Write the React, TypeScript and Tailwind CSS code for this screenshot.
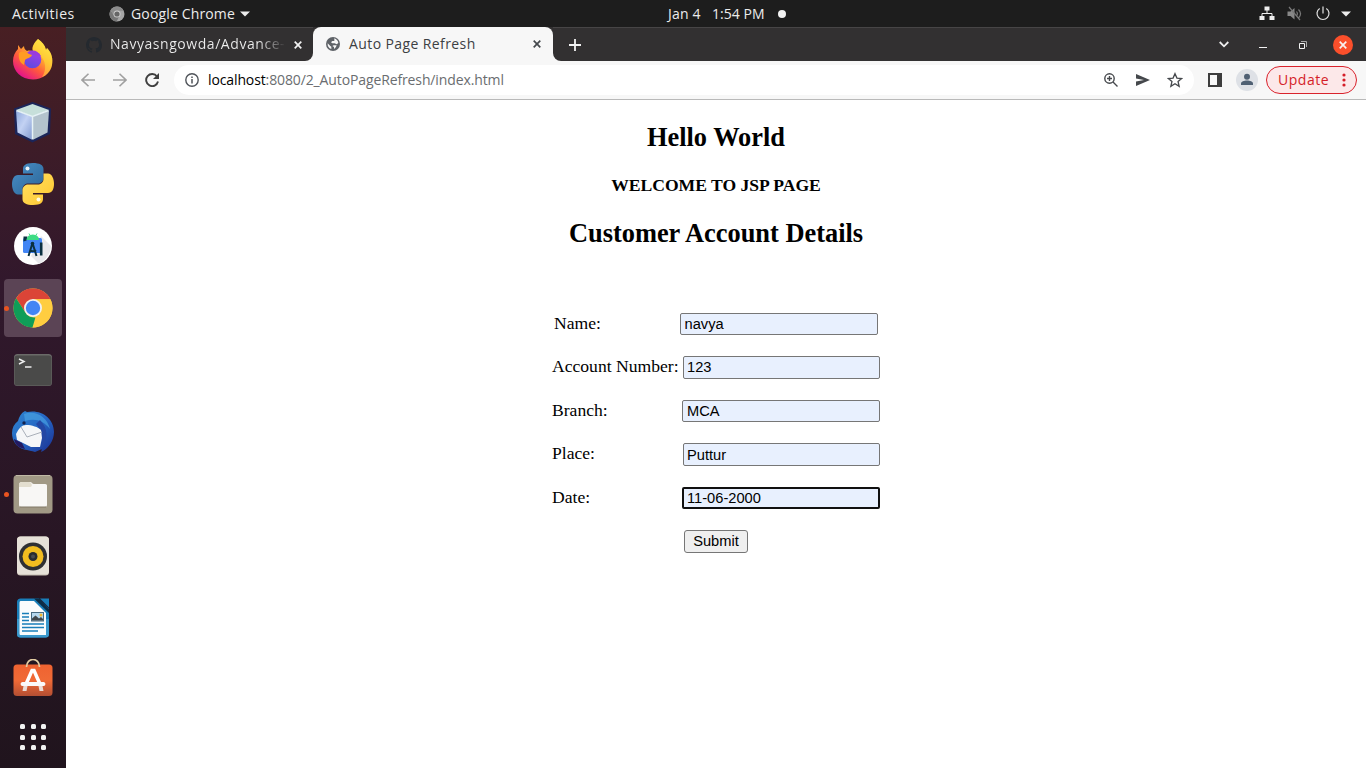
import React from "react";

const ui = "font-['Open_Sans','Noto_Sans',sans-serif]";

function Svg({ w = 42, h = w, box, className = "", children }: { w?: number; h?: number; box?: string; className?: string; children: React.ReactNode }) {
  return (
    <svg width={w} height={h} viewBox={box ?? `0 0 ${w} ${h}`} className={`shrink-0 ${className}`} fill="none">
      {children}
    </svg>
  );
}

function Firefox() {
  return (
    <Svg>
      <defs>
        <linearGradient id="ff1" x1="0.85" y1="0.1" x2="0.25" y2="0.95">
          <stop offset="0" stopColor="#fff04a" />
          <stop offset="0.35" stopColor="#ffb02e" />
          <stop offset="0.65" stopColor="#ff5a3c" />
          <stop offset="1" stopColor="#e3138a" />
        </linearGradient>
        <linearGradient id="ff2" x1="0.7" y1="0" x2="0.3" y2="1">
          <stop offset="0" stopColor="#a63be8" />
          <stop offset="1" stopColor="#5b4ce0" />
        </linearGradient>
      </defs>
      <path d="M26 0c4 3 7 6 8 11l1-2c5 5 6 11 5 17-2 9-10 14.500-19 14.500C9 40.500 1 32 1 22c0-5 2-9 5-12V6l3 4 3-3c0 2 1 4 3 5 3-1 4 0 6 0-2-4 2-9 5-12z" fill="url(#ff1)" />
      <path d="M26 0c4 3 7 6 8 11l1-2c5 5 6 11 5 17-1 6-5 10-10 12 5-7 4-17-3-23-3-1-5-2-6-3-1-5 2-9 5-12z" fill="#ffdc3c" opacity=".55" />
      <circle cx="20.500" cy="20.500" r="8.800" fill="url(#ff2)" />
      <path d="M7 14c4-3 7-1 10 1l3 1c-1 3-5 3-7 5 0 2-1 3-1 5-4-2-6-7-5-12z" fill="#ff9b22" />
      <path d="M16 13c5-3 10-1 13 4l-7-1z" fill="#9a3bdc" />
    </Svg>
  );
}

function NetBeans() {
  return (
    <Svg>
      <defs>
        <linearGradient id="nb" x1="0" y1="0" x2="1" y2="1">
          <stop offset="0" stopColor="#8ea9dd" />
          <stop offset="0.45" stopColor="#c3d2f3" />
          <stop offset="1" stopColor="#7f98cf" />
        </linearGradient>
      </defs>
      <path d="M20.500 1L39 7.500 38 33l-17.500 8.500L3 33 2 7.500z" fill="#1b2559" />
      <path d="M20.500 3L37 9l-16.500 6.500L4 9z" fill="#c6dfda" />
      <path d="M4 9.500l16.500 6V39L5.500 31.500z" fill="url(#nb)" />
      <path d="M20.500 15.500l16.500-6-1.500 22L20.500 39z" fill="#b3c3cd" />
      <path d="M4.500 9.500l16 6 16-6M20.500 15.500V38" stroke="#e6f2f6" strokeWidth="1.500" />
    </Svg>
  );
}

function Python() {
  return (
    <Svg>
      <defs>
        <linearGradient id="py1" x1="0" y1="0" x2="1" y2="1">
          <stop offset="0" stopColor="#4a90c8" />
          <stop offset="1" stopColor="#2a6496" />
        </linearGradient>
        <linearGradient id="py2" x1="0" y1="0" x2="1" y2="1">
          <stop offset="0" stopColor="#ffe263" />
          <stop offset="1" stopColor="#ffc52e" />
        </linearGradient>
      </defs>
      <path d="M20.800 0C13 0 11 3 11 6v4.500h10V12H6c-4 0-6 4-6 9s2 10.500 6 10.500h4.500V26c0-3 2.500-5.500 5.500-5.500h10c3 0 5.500-2.500 5.500-5.500V6c0-4-4-6-10.700-6z" fill="url(#py1)" />
      <path d="M21.200 42C29 42 31 39 31 36v-4.500H21V30h15c4 0 6-4 6-9s-2-10.500-6-10.500h-4.500V16c0 3-2.500 5.500-5.500 5.500H16c-3 0-5.500 2.500-5.500 5.500v9c0 4 4 6 10.700 6z" fill="url(#py2)" />
      <circle cx="15.500" cy="5.500" r="2" fill="#eaf4fb" />
      <circle cx="26.500" cy="36.500" r="2" fill="#fffbe0" />
    </Svg>
  );
}

function AndroidStudio() {
  return (
    <Svg>
      <circle cx="21" cy="21" r="19" fill="#fff" />
      <path d="M29 11l10 10c0 7-5 14-12 18l-8-8z" fill="#e9e9ec" />
      <rect x="11" y="13" width="19" height="15" rx="1.500" fill="#4285f4" />
      <path d="M11.500 11.500h4l-1 4-3 1z" fill="#0b3040" />
      <path d="M14.500 15a6.300 5.500 0 0 1 12.600 0z" fill="#3ddc84" />
      <path d="M17 8.500l1.500 2.500M25 8.500L23.500 11" stroke="#3ddc84" strokeWidth="1" />
      <path d="M20.500 18l-4 13M20.500 18l4 13M17.500 25c2 1.500 4.500 1.500 6.500 0" stroke="#0b3040" strokeWidth="2" />
      <path d="M29.200 17.500v13" stroke="#0b3040" strokeWidth="2.600" />
      <circle cx="20.500" cy="18.500" r="1.800" fill="#0b3040" />
    </Svg>
  );
}

function Chrome() {
  return (
    <Svg>
      <circle cx="21" cy="21" r="19.500" fill="#ffcd40" />
      <path d="M4.110 11.250A19.500 19.500 0 0 1 38.400 12.200H21L13.400 25.400z" fill="#db4437" />
      <path d="M4.110 11.250L13.400 25.400c2 4 6 5 10 5.200L20.500 40.500A19.500 19.500 0 0 1 4.110 11.250z" fill="#0f9d58" />
      <path d="M28.600 25.400L20.500 40.500A19.500 19.500 0 0 0 38.400 12.200H21z" fill="#ffcd40" />
      <circle cx="21" cy="21" r="9" fill="#f1f1f1" />
      <circle cx="21" cy="21" r="7.200" fill="#4285f4" />
    </Svg>
  );
}

function Terminal() {
  return (
    <Svg>
      <rect x="2" y="5" width="38" height="32" rx="3.500" fill="#6a6a68" />
      <rect x="2.500" y="6.500" width="37" height="30" rx="3" fill="#4a4a49" />
      <path d="M7 10l5 2.500L7 15" stroke="#eee" strokeWidth="1.500" />
      <path d="M13 18h6.500" stroke="#eee" strokeWidth="1.500" />
    </Svg>
  );
}

function Thunderbird() {
  return (
    <Svg>
      <defs>
        <linearGradient id="tb" x1="0" y1="0" x2="1" y2="1">
          <stop offset="0" stopColor="#2f86cf" />
          <stop offset="0.5" stopColor="#2566c4" />
          <stop offset="1" stopColor="#1b2f91" />
        </linearGradient>
      </defs>
      <path d="M13 0l2 1c14-3 27 6 27 20 0 9-6 17-13 20l1-3-7 3c-6-2-16-2-20-9C1 29 0 26 0 22c0-5 2-9 6-12 1-4 3-8 7-10z" fill="url(#tb)" />
      <path d="M12 3c12-4 23 3 26 15-7-9-15-11-25-8" fill="#4aa5e4" opacity=".65" />
      <path d="M28 9c8 8 9 19 1 30 2-9 1-20-5-26z" fill="#2447a4" />
      <path d="M4 23c3-6 6-9 10-9 6 0 12 2 15 5l1 8-2 9-9 0-14-7z" fill="#f5f6f8" />
      <path d="M9 16l6 10 15-5" stroke="#a9afb9" strokeWidth="1" />
      <circle cx="12" cy="12" r="1.700" fill="#14234f" />
      <path d="M2 28c1 6 5 9 11 10l-3-6z" fill="#241a60" />
    </Svg>
  );
}

function Files() {
  return (
    <Svg>
      <rect x="1.500" y="2" width="39" height="38.500" rx="4" fill="#a19985" />
      <path d="M4 2.500h34" stroke="#c0b9a5" />
      <path d="M7 12c0-2 1-3 3-3h8c2 0 2 2 4 2h11c2 0 2 1 2 2v19c0 1-1 2-2 2H9c-1 0-2-1-2-2z" fill="#f8f7f5" />
      <path d="M7 12c0-2 1-3 3-3h7c3 0 4 5 1 5H7z" fill="#e3decf" />
      <path d="M8 34h26" stroke="#817966" />
    </Svg>
  );
}

function Rhythmbox() {
  return (
    <Svg>
      <rect x="5" y="1.500" width="32" height="39" rx="3.500" fill="#c5bdb1" />
      <rect x="5" y="1.500" width="32" height="38" rx="3.500" fill="#e6e1d8" />
      <circle cx="21" cy="21.500" r="14" fill="#2f3033" />
      <circle cx="21" cy="21.500" r="10.500" fill="#f2bd20" />
      <circle cx="21" cy="21.500" r="4.500" fill="#292b30" />
      <circle cx="21" cy="21.500" r="2" fill="#484a50" />
    </Svg>
  );
}

function Writer() {
  return (
    <Svg>
      <path d="M9 1.500h18l10 10V37a3.500 3.500 0 0 1-3.500 3.500h-25A3.500 3.500 0 0 1 5 37V5a3.500 3.500 0 0 1 4-3.500z" fill="#197eb9" />
      <path d="M5 22h32v15a3.500 3.500 0 0 1-3.500 3.500h-25A3.500 3.500 0 0 1 5 37z" fill="#3a98cc" />
      <path d="M9 4h13l12 12v22H9c-1 0-1.500-.5-1.500-1.500V6C7.500 4.500 8 4 9 4z" fill="#fafcfd" />
      <path d="M22 1.500L37 16v-4L27.500 1.500z" fill="#0b2d46" />
      <path d="M28 1.500h9v9z" fill="#197eb9" />
      <path d="M10 16.500h7M10 20h7M10 23.500h7M10 27h22M10 30.500h22M10 34h16" stroke="#197eb9" strokeWidth="1.700" />
      <rect x="19.500" y="15.500" width="12" height="8.500" fill="#b6d8ee" stroke="#476a80" />
      <path d="M20 23.500v-2l3.500-3 3.500 3 2-1.500 2 2v1.500z" fill="#42484c" />
      <circle cx="29" cy="18" r="1.500" fill="#f2b72b" />
    </Svg>
  );
}

function Software() {
  return (
    <Svg>
      <defs>
        <linearGradient id="sw" x1="0" y1="0" x2="0" y2="1">
          <stop offset="0" stopColor="#ef6331" />
          <stop offset="0.5" stopColor="#f06a36" />
          <stop offset="1" stopColor="#b34f33" />
        </linearGradient>
      </defs>
      <rect x="1.500" y="5.500" width="39" height="31.500" rx="3.500" fill="url(#sw)" />
      <path d="M14.500 8c0-10 13-10 13 0" stroke="#e4cda3" strokeWidth="1.700" />
      <path d="M14.500 24L20 11.500h2L27.500 24" stroke="#fff" strokeWidth="3.500" />
      <path d="M10.500 23h21c2.500 0 2.500 4 0 4h-21c-2.500 0-2.500-4 0-4z" fill="#fafafa" />
      <path d="M11.500 27h4l-1 5h-4zM26.500 27h4l1 5h-4z" fill="#e9dcd6" />
    </Svg>
  );
}

const apps = [
  { name: "Firefox", icon: <Firefox /> },
  { name: "NetBeans", icon: <NetBeans /> },
  { name: "Python", icon: <Python /> },
  { name: "Android Studio", icon: <AndroidStudio /> },
  { name: "Chrome", icon: <Chrome />, running: true, active: true },
  { name: "Terminal", icon: <Terminal /> },
  { name: "Thunderbird", icon: <Thunderbird /> },
  { name: "Files", icon: <Files />, running: true },
  { name: "Rhythmbox", icon: <Rhythmbox /> },
  { name: "Writer", icon: <Writer /> },
  { name: "Software", icon: <Software /> },
];

function Dock() {
  return (
    <nav className="flex h-[741px] w-[66px] shrink-0 flex-col bg-linear-to-b from-[#481f23] via-[#31182c] via-35% to-[#20141d] pt-[2px]">
      {apps.map((app) => (
        <div key={app.name} className="flex h-[62px] items-center pl-1">
          <div className={`flex size-[58px] items-center rounded ${app.active ? "bg-[#5b4455]" : ""}`}>
            <span className={`size-[5px] rounded-full ${app.running ? "bg-[#e95420]" : ""}`} />
            <span className="ml-[3px]">{app.icon}</span>
          </div>
        </div>
      ))}
      <div className="ml-5 mt-[13px] grid w-[26px] grid-cols-3 gap-[5.500px]">
        {Array.from({ length: 9 }, (_, i) => (
          <span key={i} className="size-[5px] rounded-[1.500px] bg-[#f2f2f2]" />
        ))}
      </div>
    </nav>
  );
}

function TopBar() {
  return (
    <header className="flex h-[27px] items-center bg-[#1d1d1d] text-[14px] text-[#ececec]">
      <div className="w-[97px] pb-px pl-3 tracking-[0.5px]">Activities</div>
      <div className="flex w-[571px] items-center pl-3">
        <Svg w={16}>
          <circle cx="8" cy="8" r="7.500" fill="#a6a6a6" />
          <path d="M1.500 4.200A7.500 7.500 0 0 0 7.700 15.500L10.500 9.500H5z" fill="#777" />
          <path d="M1.500 4.200A7.500 7.500 0 0 1 14.700 4.700H8L5 9z" fill="#8b8b8b" />
          <circle cx="8" cy="8" r="3.500" fill="#d0d0d0" />
          <circle cx="8" cy="8" r="2.600" fill="#666" />
        </Svg>
        <span className="ml-[6px] w-[104px] pb-px tracking-[0.15px] whitespace-nowrap">Google Chrome</span>
        <Svg w={10} h={6} className="ml-[5px]"><path d="M0 .5h10L5 5.500z" fill="#ececec" /></Svg>
      </div>
      <div className="flex w-[590px] items-center whitespace-nowrap">
        <span className="w-[44px] pb-px tracking-[0.2px]">Jan 4</span>
        <span className="w-[66px] pb-px tracking-[0.050px]">1:54 PM</span>
        <span className="size-2 rounded-full bg-[#f2f2f2]" />
      </div>
      <Svg w={16} className="ml-px">
        <path d="M5.500.500h5v4h-5zM.500 10h5v4h-5zM10.500 10h5v4h-5z" fill="#eee" />
        <path d="M8 4v3.500M3 10V7.500h10V10" stroke="#eee" strokeWidth="1" />
      </Svg>
      <Svg w={16} className="ml-3">
        <path d="M.5 5.500h3L7.500 2v11.500L3.500 10h-3z" fill="#888" />
        <path d="M2 1l11 13M9.500 5.500c1.200 1.500 1.200 3 0 4.500M11.500 3.500c2.700 2.800 2.700 5.700 0 8.500" stroke="#777" strokeWidth="1.200" />
      </Svg>
      <Svg w={16} className="ml-3">
        <path d="M4.700 2.500A6 6 0 1 0 11.300 2.500M8 .5v7" stroke="#e4e4e4" strokeWidth="1.200" />
      </Svg>
      <Svg w={10} h={6} className="ml-[10px]"><path d="M0 .5h10L5 5.500z" fill="#ececec" /></Svg>
    </header>
  );
}

function Cross({ color }: { color: string }) {
  return <Svg w={8} className="block"><path d="M.700.700l6.600 6.600M7.300.700L.700 7.300" stroke={color} strokeWidth="1.700" /></Svg>;
}

function TabStrip() {
  return (
    <div className="flex h-[34px] bg-[#f7f7f7] text-[14px]">
      <div className="flex w-[247px] items-center rounded-br-lg border-t border-[#474546] bg-[#323031] pl-5">
        <Svg w={16} box="0 0 16 16">
          <path fill="#24292f" d="M8 0C3.580 0 0 3.580 0 8c0 3.540 2.290 6.530 5.470 7.590.4.070.55-.17.55-.38 0-.19-.01-.82-.01-1.490-2.010.37-2.530-.49-2.690-.94-.09-.23-.48-.94-.82-1.130-.28-.15-.68-.52-.01-.53.63-.01 1.080.58 1.230.82.72 1.210 1.870.87 2.330.66.070-.52.28-.87.51-1.070-1.780-.2-3.640-.89-3.640-3.950 0-.87.31-1.590.82-2.150-.08-.2-.36-1.020.08-2.120 0 0 .67-.21 2.200.82a7.600 7.600 0 0 1 4 0c1.530-1.040 2.200-.82 2.200-.82.44 1.100.16 1.920.08 2.120.51.56.82 1.270.82 2.150 0 3.070-1.870 3.750-3.650 3.950.29.25.54.73.54 1.480 0 1.070-.01 1.930-.01 2.200 0 .21.15.46.55.38A8 8 0 0 0 16 8c0-4.420-3.580-8-8-8z" />
        </Svg>
        <span className="ml-2 w-[176px] bg-linear-to-r from-[#eeeeee] from-85% to-[#323031] bg-clip-text pb-[2px] tracking-[0.550px] whitespace-nowrap text-transparent">Navyasngowda/Advance-</span>
        <span className="ml-[8px]"><Cross color="#f2f2f2" /></span>
      </div>
      <div className="bg-[#323031]">
        <div className="flex h-full w-60 items-center rounded-t-lg bg-[#f7f7f7] pl-3 text-[#3c4043]">
          <Svg w={16} box="0 0 24 24">
            <circle cx="12" cy="12" r="10.500" fill="#5f6368" />
            <path d="M4 11l4 4 1.500 1v3.500C5.500 18.500 3.500 15 4 11zM14 3.500c3 1 5.500 3.500 6 7l-2.500 2-3-1.500H11l-2-1.500 2-2h3zM13 14h4.500c-1 3-2 4-4 5.500v-3L11 15z" fill="#f7f7f7" />
          </Svg>
          <span className="ml-2 w-[176px] pb-[2px] tracking-[0.400px] whitespace-nowrap">Auto Page Refresh</span>
          <span className="ml-[8px]"><Cross color="#45494d" /></span>
        </div>
      </div>
      <div className="flex flex-1 items-center rounded-bl-lg border-t border-[#474546] bg-[#323031]">
        <Svg w={12} className="ml-4"><path d="M6 0v12M0 6h12" stroke="#f2f2f2" strokeWidth="1.800" /></Svg>
        <Svg w={10} h={7} className="ml-auto"><path d="M.7 1L5 5.300 9.300 1" stroke="#eee" strokeWidth="1.800" /></Svg>
        <Svg w={8} h={10} className="ml-[30px]"><path d="M0 7.500h8" stroke="#f2f2f2" /></Svg>
        <Svg w={8} className="ml-8"><path d="M.5 2.500h5v5h-5z" stroke="#f2f2f2" /><path d="M2 .5h5.500V6" stroke="#aaa" /></Svg>
        <span className="mr-[13px] ml-[26px] flex size-5 items-center justify-center rounded-full bg-[#fb4f2b]"><Cross color="#f8f0ee" /></span>
      </div>
    </div>
  );
}

function Toolbar() {
  return (
    <div className="flex h-[39px] items-center border-b border-[#b9b9b9] bg-[#f7f7f7] text-[14px]">
      <Svg w={14} className="ml-[15px]"><path d="M14 7H1.500M7.500.700L1 7l6.500 6.300" stroke="#a0a0a0" strokeWidth="1.600" /></Svg>
      <Svg w={14} className="ml-[18px]"><path d="M0 7h12.500M6.500.700L13 7l-6.500 6.300" stroke="#a0a0a0" strokeWidth="1.600" /></Svg>
      <Svg w={14} className="ml-[18px]"><path d="M12 3.500A6 6 0 1 0 13 8.500" stroke="#404040" strokeWidth="1.900" /><path d="M14 0v6H8z" fill="#404040" /></Svg>
      <div className="ml-[15px] flex h-[30px] w-[1020px] items-center rounded-full bg-white pl-[11px]">
        <Svg w={14}><circle cx="7" cy="7" r="6.200" stroke="#50545a" strokeWidth="1.400" /><path d="M7 6v4.500M7 3.400v1.500" stroke="#50545a" strokeWidth="1.500" /></Svg>
        <span className="ml-[9px] pb-[2px] tracking-[-0.120px] whitespace-nowrap text-[#6a6d70]"><span className="text-black">localhost</span>:8080/2_AutoPageRefresh/index.html</span>
        <Svg w={14} className="ml-auto"><circle cx="5.500" cy="5.500" r="4.700" stroke="#45484c" strokeWidth="1.400" /><path d="M9 9l4.500 4.500M5.500 3v5M3 5.500h5" stroke="#45484c" strokeWidth="1.400" /></Svg>
        <Svg w={14} h={12} className="ml-[18px]"><path d="M0 0l14 6-14 6V7.500L8 6 0 4.500z" fill="#45484c" /></Svg>
        <Svg w={16} box="0 0 24 24" className="mr-[11px] ml-[17px]"><path d="M12 2.500l2.900 6.600 7.100.6-5.400 4.700 1.600 7L12 17.700l-6.200 3.700 1.600-7L2 9.700l7.100-.6z" stroke="#45484c" strokeWidth="2" /></Svg>
      </div>
      <Svg w={14} className="ml-[14px]"><path d="M0 0h14v14H0zM2 2v10h7V2z" fill="#3d3d3d" fillRule="evenodd" /></Svg>
      <Svg w={22} className="ml-[14px]"><circle cx="11" cy="11" r="11" fill="#dee1e6" /><circle cx="11" cy="7.800" r="3" fill="#4f6073" /><path d="M5 16v-1.500c0-4 12-4 12 0V16z" fill="#4f6073" /></Svg>
      <div className="ml-2 flex h-7 w-[91px] items-center rounded-full border border-[#d9222c] bg-[#fce8e9] pl-[11px] text-[#d51d28]">
        <span className="w-[50px] pb-[2px] tracking-[0.550px] whitespace-nowrap">Update</span>
        <Svg w={4} h={14} className="ml-[14px]"><circle cx="2" cy="2" r="1.600" fill="#d51d28" /><circle cx="2" cy="7" r="1.600" fill="#d51d28" /><circle cx="2" cy="12" r="1.600" fill="#d51d28" /></Svg>
      </div>
    </div>
  );
}

const rows = [
  { label: "Name:", value: "navya", row: "h-[43px] pl-[2px]", col: "w-[126px]", field: "h-[22px] w-[198px] border border-[#767676] pl-[3.500px]" },
  { label: "Account Number:", value: "123", row: "h-[44px]", col: "w-[131px]", field: "h-[23px] w-[197px] border border-[#767676] pl-[3px] pb-[2px]" },
  { label: "Branch:", value: "MCA", row: "h-[43px]", col: "w-[130px]", field: "h-[22px] w-[198px] border border-[#767676] pl-[4px]" },
  { label: "Place:", value: "Puttur", row: "h-[44px]", col: "w-[131px]", field: "h-[23px] w-[197px] border border-[#767676] pl-[3px]" },
  { label: "Date:", value: "11-06-2000", row: "h-[43px]", col: "w-[130px]", field: "h-[22px] w-[198px] border-2 border-[#101010] pl-[3px]" },
];

function Page() {
  return (
    <main className="flex flex-1 flex-col items-center bg-white font-['Liberation_Serif',serif] text-[17.600px] text-black">
      <h2 className="mt-[22px] text-[26.400px] leading-[30px] font-bold">Hello World</h2>
      <h4 className="mt-[23px] leading-5 font-bold">WELCOME TO JSP PAGE</h4>
      <h2 className="mt-[23px] text-[26.400px] leading-[30px] font-bold">Customer Account Details</h2>
      <form className="mt-[65px] w-[328px]">
        {rows.map((r) => (
          <div key={r.label} className={`flex items-start ${r.row}`}>
            <label className={`shrink-0 leading-5 whitespace-nowrap ${r.col}`}>{r.label}</label>
            <input readOnly defaultValue={r.value} className={`shrink-0 rounded-[2px] bg-[#e8f0fe] font-['Liberation_Sans',sans-serif] text-[14.667px] outline-none ${r.field}`} />
          </div>
        ))}
        <button type="button" className="ml-[132px] block h-[23px] w-16 rounded-[3px] border border-[#767676] bg-[#efefef] font-['Liberation_Sans',sans-serif] text-[14.667px] leading-[21px]">Submit</button>
      </form>
    </main>
  );
}

export default function App() {
  return (
    <div className={`h-[768px] w-[1366px] overflow-hidden bg-white ${ui}`}>
      <TopBar />
      <div className="flex">
        <Dock />
        <div className="flex h-[741px] flex-1 flex-col">
          <TabStrip />
          <Toolbar />
          <Page />
        </div>
      </div>
    </div>
  );
}
